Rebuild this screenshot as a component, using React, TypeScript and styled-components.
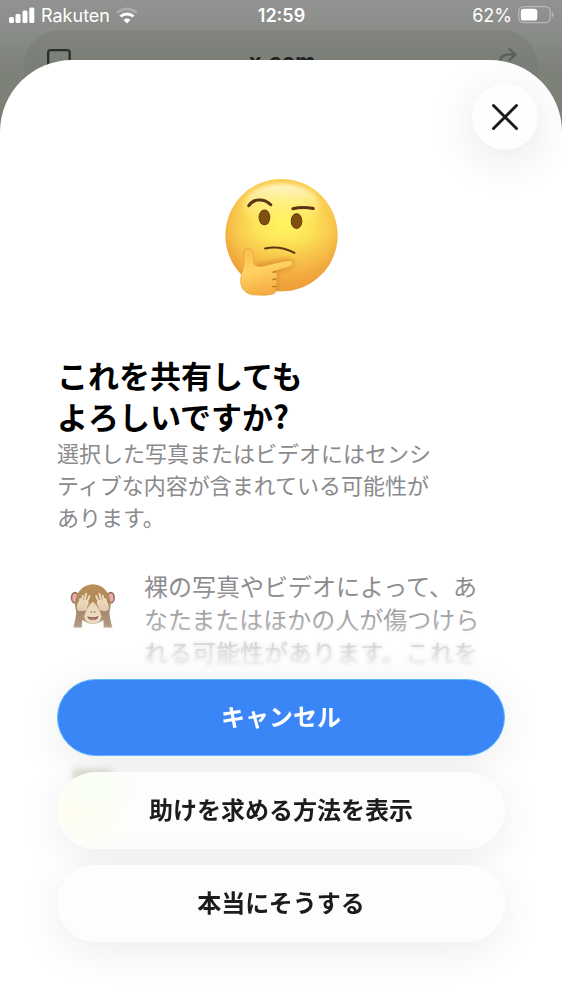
import React from "react";
import styled, { createGlobalStyle, css } from "styled-components";

const GlobalStyle = createGlobalStyle`
  *, *::before, *::after { box-sizing: border-box; }
  body {
    margin: 0;
    background: #fff;
    font-family: "Noto Sans CJK JP", sans-serif;
  }
  h1, p, ul { margin: 0; padding: 0; }
`;

const Screen = styled.div`
  display: flex;
  flex-direction: column;
  min-height: 100vh;
  overflow: hidden;
  background: linear-gradient(#919391 0, #8a8d89 30px, #7d8179 70px, #7b8076 140px, #fff 141px);
`;

const StatusBar = styled.header`
  display: grid;
  grid-template-columns: 1fr auto 1fr;
  align-items: center;
  height: 30px;
  padding: 0 8px 0 9px;
  color: #fff;
  font-family: Inter, sans-serif;
  font-size: 18px;
`;

const StatusGroup = styled.div<{ $end?: boolean }>`
  display: flex;
  align-items: center;
  gap: 6px;
  justify-content: ${(p) => (p.$end ? "flex-end" : "flex-start")};
`;

const Clock = styled.time`
  font-weight: 600;
`;

const AddressBar = styled.div`
  display: grid;
  grid-template-columns: 1fr auto 1fr;
  align-items: start;
  height: 88px;
  margin: 0 24px;
  padding: 18px 20px 0 22px;
  border-radius: 36px;
  background: linear-gradient(#81847c, #797e77 36px);
  color: #20231f;

  svg:last-child { justify-self: end; }
`;

const Host = styled.span`
  font: 700 22px/26px Inter, sans-serif;
`;

const Sheet = styled.main`
  position: relative;
  display: flex;
  flex: 1;
  flex-direction: column;
  margin-top: -58px;
  border-radius: 72px 72px 0 0;
  background: #fff;
  overflow: hidden;
`;

const CloseButton = styled.button`
  display: grid;
  place-items: center;
  align-self: flex-end;
  width: 66px;
  height: 66px;
  margin: 24px 24px 0;
  padding: 0;
  border: 0;
  border-radius: 50%;
  background: #fefefe;
  box-shadow: 0 8px 48px rgba(0, 0, 0, 0.11);
  cursor: pointer;
`;

const Hero = styled.div`
  display: flex;
  justify-content: center;
  padding: 28px 0 58px;
`;

const Content = styled.section`
  padding: 0 57px;
`;

const Title = styled.h1`
  color: #000;
  font-size: 31px;
  font-weight: 700;
  line-height: 41px;
`;

const Lead = styled.p`
  color: #8a8a8d;
  font-size: 22px;
  line-height: 32px;
`;

const Reasons = styled.ul`
  margin-top: 37px;
  list-style: none;
`;

const Reason = styled.li`
  display: flex;
  gap: 27px;
  padding-left: 13px;
  color: #8a8a8d;
  font-size: 24px;
  line-height: 33px;

  svg { flex: none; margin-top: 14px; }
  p { white-space: nowrap; }
`;

const Footer = styled.footer`
  position: absolute;
  inset: auto 0 0;
  padding: 96px 57px 57px;
`;

const Veil = styled.div<{ $strong?: boolean }>`
  position: absolute;
  inset: 0;
  ${(p) =>
    p.$strong
      ? css`
          backdrop-filter: blur(2px);
          background: rgba(255, 255, 255, 0.55);
          mask-image: linear-gradient(transparent 36px, #000 84px);
        `
      : css`
          background: linear-gradient(rgba(255, 255, 255, 0), rgba(255, 255, 255, 0.5) 80px);
        `}
`;

const Actions = styled.div`
  position: relative;
  display: flex;
  flex-direction: column;
  gap: 16px;
`;

const Glow = styled.span`
  position: absolute;
  top: 90px;
  left: 16px;
  width: 38px;
  height: 14px;
  background: #dfdfd4;
  filter: blur(3px);
`;

const Action = styled.button<{ $primary?: boolean; $tinted?: boolean }>`
  position: relative;
  height: 77px;
  padding: 0 24px 4px;
  border: 1px solid #fff;
  border-radius: 39px;
  background: #fdfdfd;
  box-shadow: 0 8px 44px rgba(0, 0, 0, 0.08);
  color: #1c1c1c;
  font: 700 24px/36px "Noto Sans CJK JP", sans-serif;
  cursor: pointer;

  ${(p) =>
    p.$tinted &&
    css`
      background:
        radial-gradient(ellipse 36px 30px at 36px 14px, #f8fff4, rgba(248, 255, 244, 0)),
        radial-gradient(ellipse 70px 60px at 14px 36px, #fffef0, rgba(255, 254, 240, 0)),
        #fdfdfd;
    `}

  ${(p) =>
    p.$primary &&
    css`
      border-color: #5ab8f8;
      background: #3b86f7;
      color: #fff;
    `}
`;

const Signal = () => (
  <svg width="26" height="17" viewBox="0 0 26 17" fill="#fff" aria-hidden="true">
    <rect x="0" y="10" width="5" height="6" rx="1.5" />
    <rect x="6.5" y="7" width="5" height="9" rx="1.5" />
    <rect x="13.5" y="3.5" width="5" height="12.5" rx="1.5" />
    <rect x="20.3" y="0.5" width="5" height="15.5" rx="1.5" />
  </svg>
);

const Wifi = () => (
  <svg width="22" height="17" viewBox="0 0 22 17" fill="none" aria-hidden="true">
    <path d="M1 6C7 0.500 15 0.500 21 6" stroke="#a9aca8" strokeWidth="3" />
    <path d="M4.500 9.500C8.300 6 13.700 6 17.500 9.500" stroke="#fff" strokeWidth="3" />
    <path d="M7.500 12.900C9.500 11.100 12.500 11.100 14.500 12.900L11 16.400Z" fill="#fff" />
  </svg>
);

const Battery = () => (
  <svg width="36" height="18" viewBox="0 0 36 18" aria-hidden="true">
    <rect x="0.7" y="0.7" width="31.6" height="16" rx="5" fill="none" stroke="#b6b8b5" strokeWidth="1.3" />
    <rect x="2.8" y="2.8" width="16.5" height="11.8" rx="3.2" fill="#fff" />
    <path d="M34 6C36 7 36 10.500 34 11.500Z" fill="#b6b8b5" />
  </svg>
);

const PageIcon = () => (
  <svg width="26" height="30" viewBox="0 0 26 30" fill="none" aria-hidden="true">
    <rect x="2.200" y="2.200" width="21.500" height="20" rx="2.500" stroke="#2a2d29" strokeWidth="2.300" />
  </svg>
);

const ShareIcon = () => (
  <svg width="20" height="22" viewBox="0 0 20 22" fill="none" stroke="#5b5f58" strokeWidth="2.300" aria-hidden="true">
    <path d="M2 18V14C2 9 6 6.500 10 6.500H17M11.500 1L17.500 6.500L11.500 12" strokeLinecap="round" strokeLinejoin="round" />
  </svg>
);

const CloseIcon = () => (
  <svg width="28" height="28" viewBox="0 0 28 28" fill="none" aria-hidden="true">
    <path d="M2.500 2.500L25.500 25.500M25.500 2.500L2.500 25.500" stroke="#1a1a1a" strokeWidth="3" strokeLinecap="round" />
  </svg>
);

const ThinkingFace = () => (
  <svg width="117" height="118" viewBox="55 38 350 353" role="img" aria-label="考える顔">
    <defs>
      <radialGradient id="skin" cx="0.52" cy="0.4" r="0.62">
        <stop offset="0" stopColor="#fff45f" />
        <stop offset="0.4" stopColor="#fde357" />
        <stop offset="0.72" stopColor="#f8c64c" />
        <stop offset="0.92" stopColor="#f0a53a" />
        <stop offset="1" stopColor="#e8983a" />
      </radialGradient>
      <linearGradient id="shine" x1="0" y1="0" x2="0" y2="1">
        <stop offset="0" stopColor="#fffbe0" stopOpacity="0.9" />
        <stop offset="1" stopColor="#fff45f" stopOpacity="0" />
      </linearGradient>
      <linearGradient id="jaw" x1="0" y1="0" x2="0" y2="1">
        <stop offset="0.5" stopColor="#f0a63c" stopOpacity="0" />
        <stop offset="1" stopColor="#ef9f3b" stopOpacity="0.85" />
      </linearGradient>
      <linearGradient id="hand" x1="0" y1="0" x2="0.3" y2="1">
        <stop offset="0" stopColor="#f7bc4c" />
        <stop offset="0.5" stopColor="#ffd363" />
        <stop offset="1" stopColor="#f5ad43" />
      </linearGradient>
      <filter id="soft" x="-20%" y="-20%" width="140%" height="140%">
        <feGaussianBlur stdDeviation="7" />
      </filter>
    </defs>
    <circle cx="230" cy="209" r="168" fill="url(#skin)" />
    <circle cx="230" cy="209" r="168" fill="url(#jaw)" />
    <ellipse cx="230" cy="122" rx="116" ry="66" fill="url(#shine)" filter="url(#soft)" />
    <g fill="none" stroke="#5e3412" strokeLinecap="round">
      <path d="M132 121C145 99 178 98 198 118" strokeWidth="9" />
      <path d="M264 130C283 125 305 125 325 129" strokeWidth="9" />
      <path d="M181 249C212 242 245 250 269 262" strokeWidth="6" />
    </g>
    <g fill="#81500f" stroke="#653b0e" strokeWidth="3">
      <ellipse cx="179" cy="156" rx="16" ry="22" />
      <ellipse cx="275" cy="167" rx="16" ry="22" />
    </g>
    <path d="M150 294C188 292 230 276 252 279C272 282 271 303 250 311L220 322L218 374C190 388 150 350 150 294Z" fill="#d37d24" opacity="0.55" filter="url(#soft)" />
    <path
      d="M117 262C117 250 124 247 131 249C142 251 147 262 147 275C146 287 146 297 152 300C160 304 172 303 183 300C205 294 230 288 250 285C262 284 266 291 263 297C260 303 250 305 240 308C228 311 216 313 211 318C219 322 219 336 212 340C218 346 218 358 211 362C217 368 214 378 206 384C195 389 175 389 150 388C125 387 110 372 108 350C107 335 112 320 116 305C119 290 117 275 117 262Z"
      fill="url(#hand)"
      stroke="#e49a37"
      strokeWidth="2"
    />
    <path d="M211 318L205 320M212 340L204 342M211 362L204 363" fill="none" stroke="#b9691d" strokeWidth="4" strokeLinecap="round" />
  </svg>
);

const MonkeyFace = () => (
  <svg width="47" height="46" viewBox="60 68 142 138" role="img" aria-label="見ざる">
    <defs>
      <linearGradient id="fur" x1="0" y1="0" x2="0" y2="1">
        <stop offset="0" stopColor="#b98f55" />
        <stop offset="0.4" stopColor="#a67c46" />
        <stop offset="1" stopColor="#94704f" />
      </linearGradient>
      <linearGradient id="palm" x1="0" y1="0" x2="0" y2="1">
        <stop offset="0" stopColor="#ecd8b8" />
        <stop offset="1" stopColor="#dcc0a0" />
      </linearGradient>
    </defs>
    <ellipse cx="75" cy="112" rx="13" ry="18" fill="#8a6549" />
    <ellipse cx="183" cy="112" rx="13" ry="18" fill="#8a6549" />
    <ellipse cx="75" cy="112" rx="8" ry="13" fill="#e9a3aa" />
    <ellipse cx="183" cy="112" rx="8" ry="13" fill="#e9a3aa" />
    <ellipse cx="129" cy="131" rx="54" ry="60" fill="url(#fur)" />
    <path d="M129 124C140 132 151 152 155 168C153 184 143 190 129 190C115 190 105 184 103 168C107 152 118 132 129 124Z" fill="#e5d3ad" />
    <circle cx="124" cy="155" r="2.500" fill="#604530" />
    <circle cx="134" cy="155" r="2.500" fill="#604530" />
    <path d="M112 168C122 172 136 172 146 167C144 184 116 184 112 168Z" fill="#6a2f2a" />
    <path d="M118 175C124 180 134 180 140 175Z" fill="#cc685c" />
    <path d="M80 143L107 151C98 162 96 182 96 202H70C75 185 79 165 80 143Z" fill="#957152" />
    <path d="M178 143L151 151C160 162 162 182 162 202H188C183 185 179 165 178 143Z" fill="#957152" />
    <path d="M81 146C80 132 84 123 92 121L112 119C119 124 117 134 112 139C113 148 107 153 100 151C91 154 84 152 81 146Z" fill="url(#palm)" />
    <path d="M177 146C178 132 174 123 166 121L146 119C139 124 141 134 146 139C145 148 151 153 158 151C167 154 174 152 177 146Z" fill="url(#palm)" />
    <g fill="none" stroke="#ead5b4" strokeWidth="6" strokeLinecap="round">
      <path d="M88 130L91 116M95 126L99 106M103 124L109 100M110 127L119 107" />
      <path d="M170 130L167 116M163 126L159 106M155 124L149 100M148 127L139 107" />
    </g>
  </svg>
);

export default function App() {
  return (
    <>
      <GlobalStyle />
      <Screen>
        <StatusBar>
          <StatusGroup>
            <Signal />
            <span>Rakuten</span>
            <Wifi />
          </StatusGroup>
          <Clock>12:59</Clock>
          <StatusGroup $end>
            <span>62%</span>
            <Battery />
          </StatusGroup>
        </StatusBar>
        <AddressBar>
          <PageIcon />
          <Host>x.com</Host>
          <ShareIcon />
        </AddressBar>
        <Sheet>
          <CloseButton type="button" aria-label="閉じる">
            <CloseIcon />
          </CloseButton>
          <Hero>
            <ThinkingFace />
          </Hero>
          <Content>
            <Title>
              これを共有しても
              <br />
              よろしいですか?
            </Title>
            <Lead>
              選択した写真またはビデオにはセンシ
              <br />
              ティブな内容が含まれている可能性が
              <br />
              あります。
            </Lead>
            <Reasons>
              <Reason>
                <MonkeyFace />
                <p>
                  裸の写真やビデオによって、あ
                  <br />
                  なたまたはほかの人が傷つけら
                  <br />
                  れる可能性があります。これを
                </p>
              </Reason>
            </Reasons>
          </Content>
          <Footer>
            <Veil />
            <Veil $strong />
            <Actions>
              <Glow />
              <Action type="button" $primary>キャンセル</Action>
              <Action type="button" $tinted>助けを求める方法を表示</Action>
              <Action type="button">本当にそうする</Action>
            </Actions>
          </Footer>
        </Sheet>
      </Screen>
    </>
  );
}
